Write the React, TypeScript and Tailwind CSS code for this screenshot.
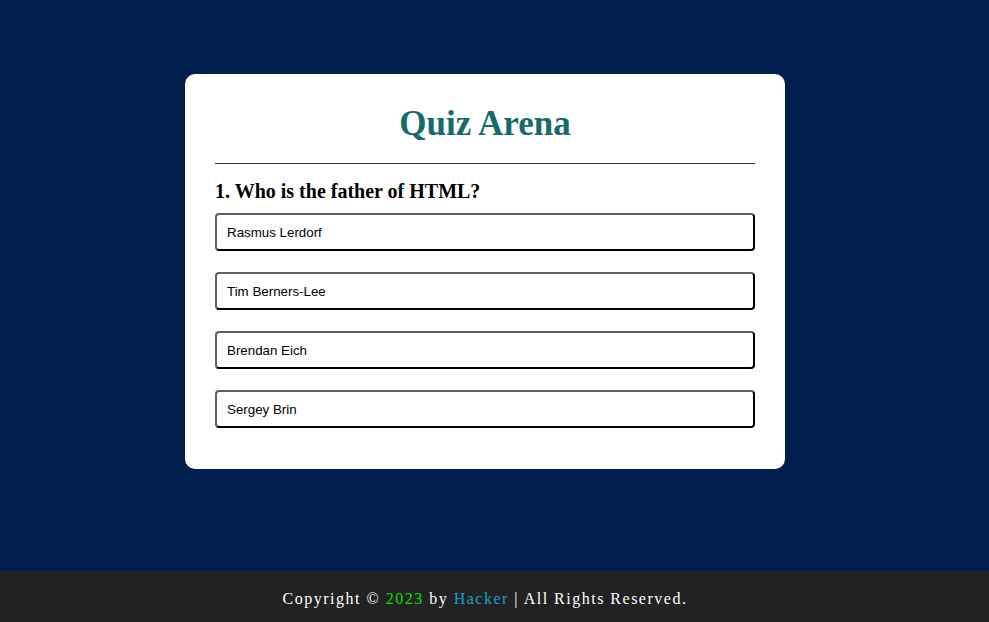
import React from "react";

const options = ["Rasmus Lerdorf", "Tim Berners-Lee", "Brendan Eich", "Sergey Brin"];

export default function App() {
	return (
		<div className="min-h-screen flex flex-col bg-[#001f4e]">
			<main className="flex-1 flex pl-[185px] pt-[74px]">
				<div className="w-[600px] h-max bg-white rounded-[10px] px-[30px] pt-[25px] pb-[41px]">
					<h1 className="text-center font-['Liberation_Serif',serif] font-bold text-[35px] leading-[50px] text-[#176b6b]">
						Quiz Arena
					</h1>
					<hr className="mt-[14px] border-0 border-t border-[#33332a]" />
					<h2 className="mt-[15px] font-['Liberation_Serif',serif] font-bold text-[20px] leading-[24px] text-black">
						1. Who is the father of HTML?
					</h2>
					<div className="mt-[10px] flex flex-col gap-[21px]">
						{options.map((o) => (
							<button
								key={o}
								className="h-[38px] w-full text-left px-[10px] pt-[1px] rounded-[4px] border-2 border-t-[#5f5f5f] border-l-[#5f5f5f] border-b-black border-r-black bg-white font-['Liberation_Sans',Arial,sans-serif] text-[13.3333px] text-black"
							>
								{o}
							</button>
						))}
					</div>
				</div>
			</main>
			<footer className="h-[51px] pt-[5px] pr-[19px] bg-[#222222] flex items-center justify-center font-['Liberation_Serif',serif] text-[16px] tracking-[1.5px] text-white">
				<p>
					Copyright © <span className="text-[#00e000]">2023</span> by{" "}
					<span className="text-[#1f9fc4]">Hacker</span> | All Rights Reserved.
				</p>
			</footer>
		</div>
	);
}
